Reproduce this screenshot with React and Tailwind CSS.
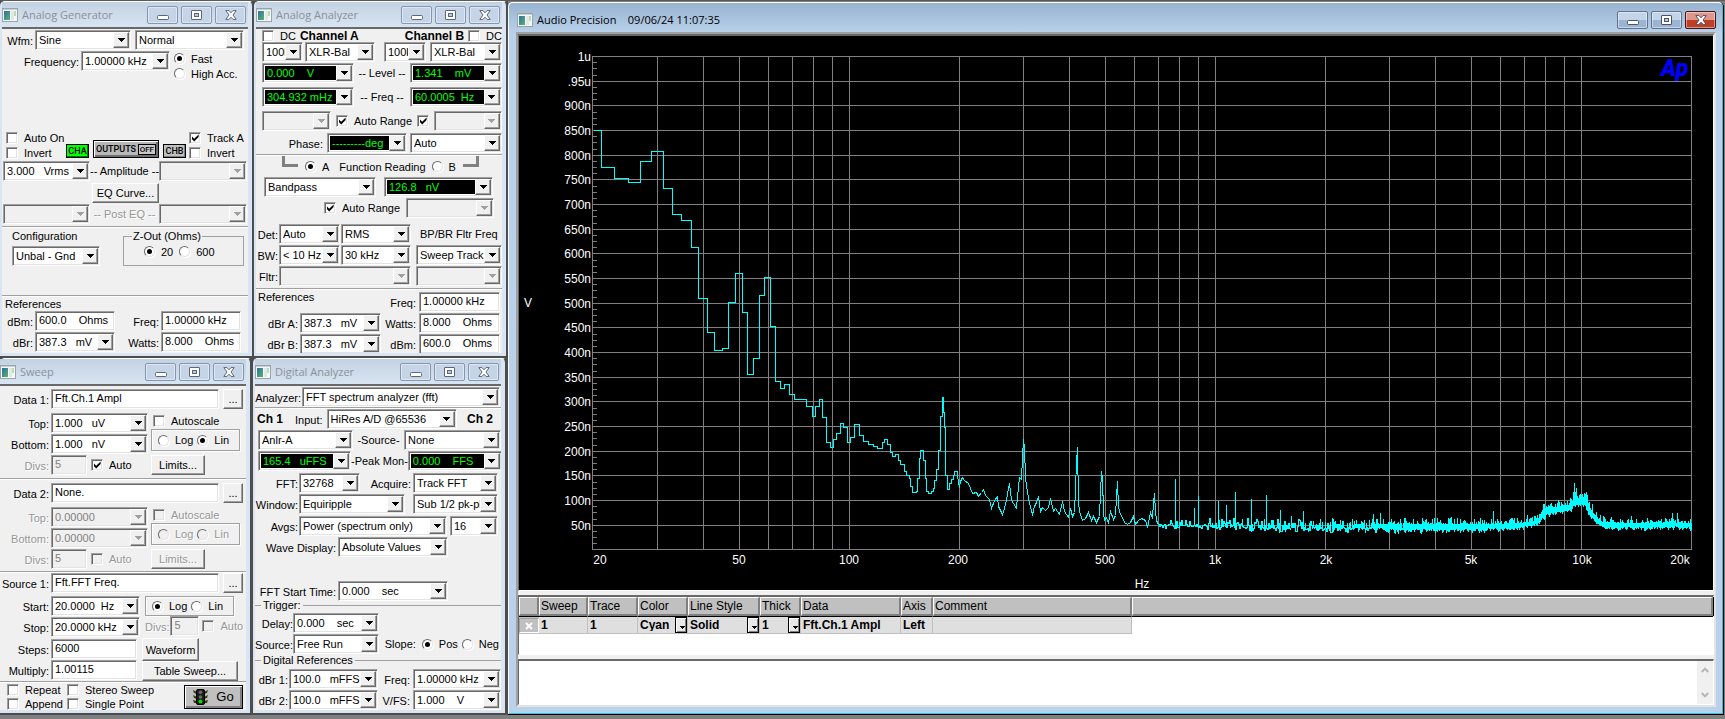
import React from "react";

const cx = (...parts) => parts.filter(Boolean).join(" ");

/* ---------- basic controls ---------- */

const SUNKEN =
  "border border-t-[#a0a0a0] border-l-[#a0a0a0] border-r-white border-b-white shadow-[inset_1px_1px_0_#696969,inset_-1px_-1px_0_#e3e3e3]";
const RAISED =
  "border border-t-white border-l-white border-r-[#696969] border-b-[#696969] shadow-[inset_-1px_-1px_0_#a0a0a0]";

function Arrow({ disabled }) {
  return (
    <svg viewBox="0 0 7 4" className="h-1 w-[7px]" shapeRendering="crispEdges" aria-hidden="true">
      <path d="M0 0H7V1H6V2H5V3H4V4H3V3H2V2H1V1H0Z" fill={disabled ? "#a0a0a0" : "#000"} />
    </svg>
  );
}

function Sel({ id, label, v, w, lit, disabled }) {
  return (
    <div className={cx("flex h-5 shrink-0 p-px", SUNKEN, disabled ? "bg-[#f0f0f0]" : "bg-white", w)}>
      <select
        id={id}
        aria-label={label}
        disabled={disabled}
        defaultValue={v}
        className={cx(
          "h-full w-full min-w-0 flex-1 appearance-none truncate text-clip pl-0.5 leading-3 whitespace-pre outline-none",
          lit ? "border border-r-0 border-white bg-black text-[#00ff00]" : "bg-transparent",
          disabled && "text-[#808080] opacity-100"
        )}
      >
        <option value={v}>{v}</option>
      </select>
      <span
        className={cx(
          "pointer-events-none flex w-4 shrink-0 items-center justify-center bg-[#f0f0f0]",
          RAISED
        )}
      >
        <Arrow disabled={disabled} />
      </span>
    </div>
  );
}

function Field({ id, label, v, w, disabled }) {
  return (
    <input
      id={id}
      aria-label={label}
      defaultValue={v}
      disabled={disabled}
      className={cx(
        "h-5 shrink-0 px-[3px] pb-0.5 leading-3 whitespace-pre outline-none",
        SUNKEN,
        disabled ? "bg-[#f0f0f0] text-[#808080]" : "bg-white",
        w
      )}
    />
  );
}

function Lbl({ htmlFor, w, disabled, children }) {
  return (
    <label
      htmlFor={htmlFor}
      className={cx(
        "shrink-0 pt-0.5 text-right whitespace-nowrap",
        disabled && "text-[#969696] [text-shadow:1px_1px_0_#fff]",
        w
      )}
    >
      {children}
    </label>
  );
}

function Check({ label, hideLabel, checked, disabled, w }) {
  return (
    <label className={cx("relative flex h-[15px] shrink-0 items-center gap-1.5 whitespace-nowrap", w)}>
      <input
        type="checkbox"
        aria-label={label}
        defaultChecked={checked}
        disabled={disabled}
        className={cx(
          "peer size-3 shrink-0 appearance-none",
          SUNKEN,
          disabled ? "bg-[#f0f0f0]" : "bg-white"
        )}
      />
      <svg
        viewBox="0 0 12 12"
        className="pointer-events-none absolute left-0 size-3 opacity-0 peer-checked:opacity-100"
        aria-hidden="true"
      >
        <path d="M3 4.5V7.2L5.2 9.4L9.6 5V2.4L5.2 6.8Z" fill="#000" />
      </svg>
      {!hideLabel && (
        <span className={cx(disabled && "text-[#969696] [text-shadow:1px_1px_0_#fff]")}>{label}</span>
      )}
    </label>
  );
}

function Radio({ name, label, checked, disabled, w }) {
  return (
    <label className={cx("relative flex h-[15px] shrink-0 items-center gap-1.5 whitespace-nowrap", w)}>
      <input
        type="radio"
        name={name}
        defaultChecked={checked}
        disabled={disabled}
        className={cx(
          "peer size-[11px] shrink-0 appearance-none rounded-full border border-t-[#696969] border-l-[#696969] border-r-[#e3e3e3] border-b-[#e3e3e3] shadow-[1px_1px_0_#fff]",
          disabled ? "bg-[#f0f0f0]" : "bg-white"
        )}
      />
      <span className="pointer-events-none absolute left-[3px] hidden size-[5px] rounded-full bg-black peer-checked:block" />
      <span className={cx(disabled && "text-[#969696] [text-shadow:1px_1px_0_#fff]")}>{label}</span>
    </label>
  );
}

function Btn({ children, w, h = "h-5", label, disabled }) {
  return (
    <button
      type="button"
      aria-label={label}
      disabled={disabled}
      className={cx(
        "flex shrink-0 items-center justify-center bg-[#f0f0f0] leading-3 whitespace-nowrap",
        RAISED,
        disabled && "text-[#969696] [text-shadow:1px_1px_0_#fff]",
        w,
        h
      )}
    >
      {children}
    </button>
  );
}

const Rule = ({ m }) => <hr className={cx("h-0.5 border-t border-b border-t-[#a0a0a0] border-b-white", m)} />;
const Row = ({ className, children }) => <div className={cx("flex items-center", className)}>{children}</div>;
const GROUP = "border border-[#a0a0a0] shadow-[1px_1px_0_#fff,inset_1px_1px_0_#fff]";

/* ---------- window chrome ---------- */

function AppIcon() {
  return (
    <svg viewBox="0 0 16 14" className="h-[14px] w-4 shrink-0" aria-hidden="true">
      <defs>
        <linearGradient id="pane" x1="0" y1="0" x2="1" y2="1">
          <stop offset="0" stopColor="#2f6ea5" />
          <stop offset="1" stopColor="#57b56a" />
        </linearGradient>
      </defs>
      <rect x="0.5" y="0.5" width="15" height="13" fill="#f6f8f8" stroke="#9aa3aa" />
      <rect x="1" y="1" width="14" height="1" fill="#c8d0d8" />
      <rect x="2" y="3" width="6" height="9" fill="url(#pane)" />
      <rect x="9" y="3" width="3" height="9" fill="#e2e8ea" />
      <rect x="12" y="3" width="2" height="5" fill="#b9dcb4" />
    </svg>
  );
}

function Glyph({ kind, active }) {
  const line = active ? "#4a5365" : "#5c6679";
  return (
    <svg viewBox="0 0 12 10" className="h-2.5 w-3" aria-hidden="true">
      {kind === "Minimize" && <rect x="0.5" y="5.5" width="11" height="4" rx="1" fill="#fff" stroke={line} />}
      {kind === "Maximize" && (
        <>
          <rect x="0.5" y="0.5" width="10" height="9" rx="0.5" fill="#fff" stroke={line} />
          <rect x="3.5" y="3.5" width="4" height="3" fill="#b9cbe0" stroke={line} />
        </>
      )}
      {kind === "Close" && (
        <path
          d="M0.8 0.6H4L6 2.8L8 0.6H11.2L8 5L11.2 9.4H8L6 7.2L4 9.4H0.8L4 5Z"
          fill="#fff"
          stroke={line}
          strokeLinejoin="round"
        />
      )}
    </svg>
  );
}

function WindowButtons({ active }) {
  return (
    <div className="flex gap-[3px]">
      {["Minimize", "Maximize", "Close"].map((k) => (
        <button
          key={k}
          type="button"
          aria-label={k}
          className={cx(
            "flex h-[18px] w-[31px] items-center justify-center rounded-[2px] border shadow-[inset_0_0_0_1px_rgba(255,255,255,0.45)]",
            !active && "border-[#8596b3] bg-[#c5d5e7]",
            active && k !== "Close" && "border-[#60718c] bg-linear-to-b from-[#c3d4e8] from-50% to-[#9bb4d1] to-50%",
            active && k === "Close" && "border-[#43141c] bg-linear-to-b from-[#e0978a] from-50% to-[#bf3f26] to-50%"
          )}
        >
          <Glyph kind={k} active={active} />
        </button>
      ))}
    </div>
  );
}

const TITLE_FONT = "font-['Open_Sans','Noto_Sans',sans-serif]";

function Panel({ title, edge = "pl-0.5", children }) {
  return (
    <section
      className={cx(
        "flex flex-col rounded-t-[5px] border-t border-r-2 border-b-2 border-t-white border-r-[#4d4d4d] border-b-[#4d4d4d] bg-[#d9e5f2] pr-1 pb-[3px]",
        edge
      )}
    >
      <header className="flex h-[25px] items-center justify-between bg-linear-to-b from-[#c3d2e2] to-[#d7e4f2] pr-0.5">
        <div className="flex items-center gap-1">
          <AppIcon />
          <h2 className={cx("text-[11px] text-[#8b9098]", TITLE_FONT)}>{title}</h2>
        </div>
        <WindowButtons />
      </header>
      <div className="h-[326px] w-[246px] overflow-hidden border-t-2 border-t-[#696969] bg-[#f0f0f0]">
        {children}
      </div>
    </section>
  );
}

/* ---------- panels ---------- */

function AnalogGenerator() {
  return (
    <Panel title="Analog Generator">
      <Row className="mt-px">
        <Lbl htmlFor="ag-wfm" w="w-[31px]">Wfm:</Lbl>
        <Row className="ml-0.5 gap-1">
          <Sel id="ag-wfm" v="Sine" w="w-24" />
          <Sel label="Waveform mode" v="Normal" w="w-[109px]" />
        </Row>
      </Row>
      <div className="mt-px flex items-start">
        <Row className="gap-0.5">
          <Lbl htmlFor="ag-freq" w="w-[77px]">Frequency:</Lbl>
          <Sel id="ag-freq" v="1.00000 kHz" w="w-[89px]" />
        </Row>
        <div className="ml-1">
          <Radio name="ag-acc" label="Fast" checked />
          <Radio name="ag-acc" label="High Acc." />
        </div>
      </div>
      <div className="mt-[49px] flex items-end pl-1">
        <div className="w-15">
          <Check label="Auto On" />
          <Check label="Invert" />
        </div>
        <div className="flex items-end gap-1 pb-0.5 font-[Roboto,sans-serif] text-[9px] leading-3 font-medium">
          <button type="button" className="h-3.5 w-[23px] border border-black bg-[#00ff00] leading-3 shadow-[inset_-1px_-1px_0_#008000]">
            CHA
          </button>
          <button
            type="button"
            className="flex h-[18px] w-[66px] items-center justify-between border border-black bg-[#b8b8b8] px-0.5 shadow-[inset_1px_1px_0_#fff,inset_-2px_-2px_0_#6e6e6e]"
          >
            OUTPUTS
            <span className="border border-black bg-[#c8c8c8] px-px text-[8px] leading-[9px]">OFF</span>
          </button>
          <button type="button" className="h-3.5 w-[23px] border border-black bg-[#c0c0c0] leading-3 shadow-[inset_-1px_-1px_0_#808080]">
            CHB
          </button>
        </div>
        <div className="ml-[3px]">
          <Check label="Track A" checked />
          <Check label="Invert" />
        </div>
      </div>
      <Row className="mt-px ml-px">
        <Sel label="Amplitude A" v={"3.000\u00a0\u00a0 Vrms"} w="w-[87px]" />
        <span className="w-[69px] text-center whitespace-nowrap">-- Amplitude --</span>
        <Sel label="Amplitude B" v="" w="w-[88px]" disabled />
      </Row>
      <Row className="mt-0.5 pl-[90px]">
        <Btn w="w-[67px]">EQ Curve...</Btn>
      </Row>
      <Row className="mt-px ml-px">
        <Sel label="Post EQ A" v="" w="w-[87px]" disabled />
        <span className="w-[69px] text-center whitespace-nowrap text-[#969696] [text-shadow:1px_1px_0_#fff]">
          -- Post EQ --
        </span>
        <Sel label="Post EQ B" v="" w="w-[88px]" disabled />
      </Row>
      <Rule m="mt-0.5" />
      <div className="mt-0.5 flex justify-between pr-1 pl-2.5">
        <div className="flex flex-col gap-1">
          <label htmlFor="ag-cfg">Configuration</label>
          <Sel id="ag-cfg" v="Unbal - Gnd" w="w-[88px]" />
        </div>
        <fieldset className={cx("h-9 w-[121px] border border-[#a0a0a0] pl-5")}>
          <legend className="-ml-3 px-px">Z-Out (Ohms)</legend>
          <Row className="mt-0.5 gap-1.5">
            <Radio name="zout" label="20" checked />
            <Radio name="zout" label="600" />
          </Row>
        </fieldset>
      </div>
      <Rule m="mt-[29px]" />
      <h3 className="mt-px ml-[3px]">References</h3>
      <div className="mt-px flex flex-col gap-px">
        <Row>
          <Lbl htmlFor="ag-dbm" w="w-[31px]">dBm:</Lbl>
          <Row className="ml-0.5 gap-0.5">
            <Field id="ag-dbm" v={"600.0\u00a0\u00a0\u00a0 Ohms"} w="w-20" />
            <Lbl htmlFor="ag-rfreq" w="w-[42px]">Freq:</Lbl>
            <Field id="ag-rfreq" v="1.00000 kHz" w="w-20" />
          </Row>
        </Row>
        <Row>
          <Lbl htmlFor="ag-dbr" w="w-[31px]">dBr:</Lbl>
          <Row className="ml-0.5 gap-0.5">
            <Sel id="ag-dbr" v={"387.3\u00a0\u00a0 mV"} w="w-20" />
            <Lbl htmlFor="ag-watts" w="w-[42px]">Watts:</Lbl>
            <Field id="ag-watts" v={"8.000\u00a0\u00a0\u00a0 Ohms"} w="w-20" />
          </Row>
        </Row>
      </div>
    </Panel>
  );
}

function Bracket({ flip }) {
  return (
    <svg viewBox="0 0 17 11" className={cx("h-[11px] w-[17px] shrink-0 self-start", flip && "-scale-x-100")} aria-hidden="true">
      <path d="M1.5 0V9.5H16" fill="none" stroke="#808080" strokeWidth="3" />
    </svg>
  );
}

function AnalogAnalyzer() {
  return (
    <Panel title="Analog Analyzer">
      <div className="flex h-[13px] items-center justify-between pl-1.5">
        <Row className="gap-1">
          <Check label="DC" />
          <h3 className="text-xs leading-3 font-bold">Channel A</h3>
        </Row>
        <Row className="gap-1">
          <h3 className="text-xs leading-3 font-bold">Channel B</h3>
          <Check label="DC" />
        </Row>
      </div>
      <div className="flex justify-between pl-1.5">
        <Row className="gap-0.5">
          <Sel label="Channel A impedance" v="100k" w="w-[41px]" />
          <Sel label="Channel A input" v="XLR-Bal" w="w-[70px]" />
        </Row>
        <Row className="gap-1">
          <Sel label="Channel B impedance" v="100k" w="w-[42px]" />
          <Sel label="Channel B input" v="XLR-Bal" w="w-[72px]" />
        </Row>
      </div>
      <Row className="mt-px justify-between pl-1.5">
        <Sel label="Channel A level" v={"0.000\u00a0\u00a0\u00a0 V"} w="w-[92px]" lit />
        <span>-- Level --</span>
        <Sel label="Channel B level" v={"1.341\u00a0\u00a0\u00a0 mV"} w="w-[92px]" lit />
      </Row>
      <Row className="mt-1 justify-between pl-1.5">
        <Sel label="Channel A frequency" v="304.932 mHz" w="w-[92px]" lit />
        <span>-- Freq --</span>
        <Sel label="Channel B frequency" v={"60.0005\u00a0 Hz"} w="w-[92px]" lit />
      </Row>
      <Row className="mt-1 justify-between pl-1.5">
        <Sel label="Channel A range" v="" w="w-[69px]" disabled />
        <Check label="Auto Range" checked />
        <Check label="Auto Range B" hideLabel checked />
        <Sel label="Channel B range" v="" w="w-[68px]" disabled />
      </Row>
      <Row className="mt-0.5 justify-end">
        <Lbl htmlFor="aa-phase">Phase:</Lbl>
        <Row className="ml-1 gap-[3px]">
          <Sel id="aa-phase" v="---------deg" w="w-20" lit />
          <Sel label="Phase range" v="Auto" w="w-[92px]" />
        </Row>
      </Row>
      <Rule m="mt-px" />
      <Row className="h-[21px] gap-1.5 pl-[26px]">
        <Bracket />
        <Radio name="fn" label="A" checked />
        <span className="ml-1">Function Reading</span>
        <Radio name="fn" label="B" />
        <Bracket flip />
      </Row>
      <Row className="gap-2 pl-2">
        <Sel label="Function" v="Bandpass" w="w-28" />
        <Sel label="Function reading" v={"126.8\u00a0\u00a0 nV"} w="w-[109px]" lit />
      </Row>
      <Row className="mt-px justify-between pr-2 pl-[68px]">
        <Check label="Auto Range" checked />
        <Sel label="Function range" v="" w="w-[88px]" disabled />
      </Row>
      <div className="mt-1.5 flex flex-col gap-px">
        <Row className="gap-px">
          <Lbl htmlFor="aa-det" w="w-[22px]">Det:</Lbl>
          <Sel id="aa-det" v="Auto" w="w-[61px]" />
          <Sel label="Detector" v="RMS" w="w-[70px]" />
          <label htmlFor="aa-bpbr" className="ml-2">BP/BR Fltr Freq</label>
        </Row>
        <Row className="gap-px">
          <Lbl htmlFor="aa-bw" w="w-[22px]">BW:</Lbl>
          <Sel id="aa-bw" v="< 10 Hz" w="w-[61px]" />
          <Sel label="Upper bandwidth" v="30 kHz" w="w-[70px]" />
          <span className="ml-1">
            <Sel id="aa-bpbr" v="Sweep Track" w="w-[86px]" />
          </span>
        </Row>
        <Row className="gap-px">
          <Lbl htmlFor="aa-fltr" w="w-[22px]">Fltr:</Lbl>
          <Sel id="aa-fltr" v="" w="w-[132px]" disabled />
          <span className="ml-1">
            <Sel label="Filter frequency" v="" w="w-[86px]" disabled />
          </span>
        </Row>
      </div>
      <Rule m="mt-0.5" />
      <div className="mt-0.5 flex flex-col gap-px">
        <div className="flex items-start justify-between pr-0.5 pl-0.5">
          <h3 className="-mt-px">References</h3>
          <Row className="gap-[3px]">
            <Lbl htmlFor="aa-freq">Freq:</Lbl>
            <Field id="aa-freq" v="1.00000 kHz" w="w-[81px]" />
          </Row>
        </div>
        <Row className="justify-between pr-0.5">
          <Row className="gap-0.5">
            <Lbl htmlFor="aa-dbra" w="w-[42px]">dBr A:</Lbl>
            <Sel id="aa-dbra" v={"387.3\u00a0\u00a0 mV"} w="w-[81px]" />
          </Row>
          <Row className="gap-[3px]">
            <Lbl htmlFor="aa-watts">Watts:</Lbl>
            <Field id="aa-watts" v={"8.000\u00a0\u00a0\u00a0 Ohms"} w="w-[81px]" />
          </Row>
        </Row>
        <Row className="justify-between pr-0.5">
          <Row className="gap-0.5">
            <Lbl htmlFor="aa-dbrb" w="w-[42px]">dBr B:</Lbl>
            <Sel id="aa-dbrb" v={"387.3\u00a0\u00a0 mV"} w="w-[81px]" />
          </Row>
          <Row className="gap-[3px]">
            <Lbl htmlFor="aa-dbm">dBm:</Lbl>
            <Field id="aa-dbm" v={"600.0\u00a0\u00a0\u00a0 Ohms"} w="w-[81px]" />
          </Row>
        </Row>
      </div>
    </Panel>
  );
}

function SweepData({ n, value, top, bottom, disabled }) {
  const id = "sw-d" + n;
  return (
    <>
      <Row className="mt-[3px] gap-0.5">
        <Lbl htmlFor={id} w="w-[49px]">Data {n}:</Lbl>
        <Row className="gap-1">
          <Field id={id} v={value} w="w-[168px]" />
          <Btn w="w-5" label={"Browse data " + n}>...</Btn>
        </Row>
      </Row>
      <div className="mt-1 flex gap-[3px]">
        <div className="flex flex-col gap-px">
          <Row className="gap-0.5">
            <Lbl htmlFor={id + "t"} w="w-[49px]" disabled={disabled}>Top:</Lbl>
            <Sel id={id + "t"} v={top} w="w-[97px]" disabled={disabled} />
          </Row>
          <Row className="gap-0.5">
            <Lbl htmlFor={id + "b"} w="w-[49px]" disabled={disabled}>Bottom:</Lbl>
            <Sel id={id + "b"} v={bottom} w="w-[97px]" disabled={disabled} />
          </Row>
        </div>
        <div>
          <Row className="h-4 pl-0.5">
            <Check label="Autoscale" disabled={disabled} />
          </Row>
          <div className={cx("flex h-[22px] w-[89px] items-center gap-1 pl-1.5", GROUP)}>
            <Radio name={id + "s"} label="Log" disabled={disabled} />
            <Radio name={id + "s"} label="Lin" checked={!disabled} disabled={disabled} />
          </div>
        </div>
      </div>
      <Row className="mt-px gap-0.5">
        <Lbl htmlFor={id + "v"} w="w-[49px]" disabled>Divs:</Lbl>
        <Row className="gap-1">
          <Field id={id + "v"} v="5" w="w-9" disabled />
          <Check label="Auto" checked={!disabled} disabled={disabled} w="w-14" />
          <Btn w="w-[54px]" disabled={disabled}>Limits...</Btn>
        </Row>
      </Row>
      <Rule m={disabled ? "mt-0.5" : "mt-[3px]"} />
    </>
  );
}

function TrafficLight() {
  return (
    <svg viewBox="0 0 15 16" className="h-4 w-[15px]" aria-hidden="true">
      <path d="M0 1L4 3V5L1 4ZM0 6L4 8V10L1 9ZM0 11L4 12V14L1 14ZM15 1L11 3V5L14 4ZM15 6L11 8V10L14 9ZM15 11L11 12V14L14 14Z" fill="#3a3a10" />
      <rect x="3.5" y="0.5" width="8" height="15" rx="1.5" fill="#1c1c1c" stroke="#000" />
      <circle cx="7.5" cy="3.3" r="1.8" fill="#6b6b6b" />
      <circle cx="7.5" cy="8" r="1.8" fill="#6b6b6b" />
      <circle cx="7.5" cy="12.6" r="2" fill="#00e000" />
    </svg>
  );
}

function Sweep() {
  return (
    <Panel title="Sweep" edge="pl-0">
      <SweepData n={1} value="Fft.Ch.1 Ampl" top={"1.000\u00a0\u00a0 uV"} bottom={"1.000\u00a0\u00a0 nV"} />
      <SweepData n={2} value="None." top="0.00000" bottom="0.00000" disabled />
      <Row className="gap-0.5">
        <Lbl htmlFor="sw-src" w="w-[49px]">Source 1:</Lbl>
        <Row className="gap-1">
          <Field id="sw-src" v="Fft.FFT Freq." w="w-[168px]" />
          <Btn w="w-5" label="Browse source 1">...</Btn>
        </Row>
      </Row>
      <div className="mt-[3px] flex gap-[5px]">
        <div className="flex flex-col gap-px">
          <Row className="gap-0.5">
            <Lbl htmlFor="sw-start" w="w-[49px]">Start:</Lbl>
            <Sel id="sw-start" v={"20.0000\u00a0 Hz"} w="w-[89px]" />
          </Row>
          <Row className="gap-0.5">
            <Lbl htmlFor="sw-stop" w="w-[49px]">Stop:</Lbl>
            <Sel id="sw-stop" v="20.0000 kHz" w="w-[89px]" />
          </Row>
        </div>
        <div>
          <div className={cx("flex h-5 w-[89px] items-center gap-1 pl-1.5", GROUP)}>
            <Radio name="sw-scale" label="Log" checked />
            <Radio name="sw-scale" label="Lin" />
          </div>
          <Row className="gap-[3px]">
            <Row className="gap-px">
              <Lbl htmlFor="sw-divs" disabled>Divs:</Lbl>
              <Field id="sw-divs" v="5" w="w-[29px]" disabled />
            </Row>
            <Check label="Auto" disabled />
          </Row>
        </div>
      </div>
      <div className="mt-px flex gap-[5px]">
        <div className="flex flex-col gap-px pt-px">
          <Row className="gap-0.5">
            <Lbl htmlFor="sw-steps" w="w-[49px]">Steps:</Lbl>
            <Field id="sw-steps" v="6000" w="w-[86px]" />
          </Row>
          <Row className="gap-0.5">
            <Lbl htmlFor="sw-mult" w="w-[49px]">Multiply:</Lbl>
            <Field id="sw-mult" v="1.00115" w="w-[86px]" />
          </Row>
        </div>
        <div>
          <Btn w="w-[57px]" h="h-[23px]">Waveform</Btn>
          <Btn w="w-24">Table Sweep...</Btn>
        </div>
      </div>
      <Rule />
      <div className="flex items-start justify-between pr-[3px] pl-[7px]">
        <div className="-mt-px grid auto-rows-[14px] grid-cols-[60px_auto]">
          <Check label="Repeat" />
          <Check label="Stereo Sweep" />
          <Check label="Append" />
          <Check label="Single Point" />
        </div>
        <button
          type="button"
          className="mt-0.5 flex h-6 w-[59px] items-center justify-center gap-2 border border-black bg-[#c0c0c0] text-[13px] leading-4 shadow-[inset_1px_1px_0_#fff,inset_-2px_-2px_0_#808080]"
        >
          <TrafficLight />
          Go
        </button>
      </div>
    </Panel>
  );
}

function DigitalAnalyzer() {
  return (
    <Panel title="Digital Analyzer">
      <Row className="mt-px gap-px">
        <Lbl htmlFor="da-an" w="w-[46px]">Analyzer:</Lbl>
        <Sel id="da-an" v="FFT spectrum analyzer (fft)" w="w-[198px]" />
      </Row>
      <Rule />
      <Row className="pr-2 pl-0.5">
        <h3 className="w-[38px] text-xs leading-3 font-bold">Ch 1</h3>
        <Lbl htmlFor="da-in">Input:</Lbl>
        <span className="mr-auto ml-1">
          <Sel id="da-in" v="HiRes A/D @65536" w="w-[130px]" />
        </span>
        <h3 className="text-xs leading-3 font-bold">Ch 2</h3>
      </Row>
      <Row className="mt-px justify-between pl-[3px]">
        <Sel label="Channel 1 source" v="Anlr-A" w="w-[95px]" />
        <span>-Source-</span>
        <Sel label="Channel 2 source" v="None" w="w-[97px]" />
      </Row>
      <Row className="mt-px justify-between pl-[3px]">
        <Sel label="Channel 1 peak" v={"165.4\u00a0\u00a0 uFFS"} w="w-[93px]" lit />
        <span className="whitespace-nowrap">-Peak Mon-</span>
        <Sel label="Channel 2 peak" v={"0.000\u00a0\u00a0\u00a0 FFS"} w="w-[94px]" lit />
      </Row>
      <Row className="mt-0.5 justify-between pr-[3px]">
        <Row className="gap-px">
          <Lbl htmlFor="da-fft" w="w-[43px]">FFT:</Lbl>
          <Sel id="da-fft" v="32768" w="w-[61px]" />
        </Row>
        <Row className="gap-0.5">
          <Lbl htmlFor="da-acq">Acquire:</Lbl>
          <Sel id="da-acq" v="Track FFT" w="w-[85px]" />
        </Row>
      </Row>
      <Row className="mt-px justify-between pr-[3px]">
        <Row className="gap-px">
          <Lbl htmlFor="da-win" w="w-[43px]">Window:</Lbl>
          <Sel id="da-win" v="Equiripple" w="w-[106px]" />
        </Row>
        <Sel label="Alignment" v="Sub 1/2 pk-pk" w="w-[85px]" />
      </Row>
      <Row className="mt-0.5 justify-between pr-[3px]">
        <Row className="gap-px">
          <Lbl htmlFor="da-avg" w="w-[43px]">Avgs:</Lbl>
          <Sel id="da-avg" v="Power (spectrum only)" w="w-[148px]" />
        </Row>
        <Sel label="Average count" v="16" w="w-12" />
      </Row>
      <Row className="mt-px gap-0.5">
        <Lbl htmlFor="da-wave" w="w-[81px]">Wave Display:</Lbl>
        <Sel id="da-wave" v="Absolute Values" w="w-[110px]" />
      </Row>
      <Row className="mt-6 gap-0.5">
        <Lbl htmlFor="da-start" w="w-[81px]">FFT Start Time:</Lbl>
        <Sel id="da-start" v={"0.000\u00a0\u00a0\u00a0 sec"} w="w-[110px]" />
      </Row>
      <fieldset className="-mt-0.5 border-t border-[#a0a0a0]">
        <legend className="ml-1.5 px-0.5">Trigger:</legend>
        <Row className="mt-0.5">
          <Lbl htmlFor="da-delay" w="w-[38px]">Delay:</Lbl>
          <Sel id="da-delay" v={"0.000\u00a0\u00a0\u00a0 sec"} w="w-[86px]" />
        </Row>
        <Row className="mt-px justify-between pr-0.5">
          <Row>
            <Lbl htmlFor="da-src" w="w-[38px]">Source:</Lbl>
            <Sel id="da-src" v="Free Run" w="w-[86px]" />
          </Row>
          <Row className="gap-1">
            <span className="pr-0.5">Slope:</span>
            <Radio name="slope" label="Pos" checked />
            <Radio name="slope" label="Neg" />
          </Row>
        </Row>
      </fieldset>
      <fieldset className="border-t border-[#a0a0a0]">
        <legend className="ml-1.5 px-0.5">Digital References</legend>
        <div className="mt-[3px] flex flex-col gap-px">
          <Row className="justify-between">
            <Row className="gap-px">
              <Lbl htmlFor="da-dbr1" w="w-[33px]">dBr 1:</Lbl>
              <Sel id="da-dbr1" v={"100.0\u00a0\u00a0 mFFS"} w="w-[89px]" />
            </Row>
            <Row className="gap-[3px]">
              <Lbl htmlFor="da-freq">Freq:</Lbl>
              <Sel id="da-freq" v="1.00000 kHz" w="w-[88px]" />
            </Row>
          </Row>
          <Row className="justify-between">
            <Row className="gap-px">
              <Lbl htmlFor="da-dbr2" w="w-[33px]">dBr 2:</Lbl>
              <Sel id="da-dbr2" v={"100.0\u00a0\u00a0 mFFS"} w="w-[89px]" />
            </Row>
            <Row className="gap-[3px]">
              <Lbl htmlFor="da-vfs">V/FS:</Lbl>
              <Sel id="da-vfs" v={"1.000\u00a0\u00a0\u00a0 V"} w="w-[88px]" />
            </Row>
          </Row>
        </div>
      </fieldset>
    </Panel>
  );
}

/* ---------- spectrum chart ---------- */

const PLOT = { left: 74, right: 1172, top: 20, bottom: 513 };
const DECADE = (PLOT.right - PLOT.left) / 3;
const xOf = (hz) => Math.round(PLOT.left + Math.log10(hz / 20) * DECADE);
const yOf = (nv) => PLOT.bottom - ((nv - 1) / 999) * (PLOT.bottom - PLOT.top);

const GRID_HZ = [
  30, 40, 50, 60, 70, 80, 90, 100, 200, 300, 400, 500, 600, 700, 800, 900, 1000, 2000, 3000, 4000, 5000, 6000, 7000,
  8000, 9000, 10000,
];
const X_LABELS = [
  [81, "20"], [220, "50"], [330, "100"], [439, "200"], [586, "500"], [696, "1k"], [807, "2k"], [952, "5k"],
  [1063, "10k"], [1161, "20k"],
];

/* x, y pairs; the wide bins on the left are drawn as steps */
const COARSE = [
  74, 94, 82, 131, 95, 142, 109, 146, 121, 125, 132, 115, 144, 152, 153, 178, 162, 184, 172, 211, 179, 262, 188, 296,
  195, 314, 203, 312, 209, 266, 216, 237, 223, 276, 228, 338, 234, 322, 240, 259, 245, 241, 251, 290, 256, 345, 261,
  352, 265, 348, 270, 358, 275, 363, 287, 370, 293, 380, 296, 370, 300, 363, 303, 381, 307, 406, 311, 411, 314, 403,
  317, 397, 321, 387, 324, 391, 328, 406, 331, 401, 335, 388, 340, 399, 344, 405, 349, 408, 354, 410, 358, 412, 363,
  406, 365, 403, 368, 408, 371, 416, 373, 420, 376, 418, 379, 424, 381, 428, 385, 435, 387, 439, 390, 442, 391, 450,
  393, 456, 397, 455, 398, 442, 400, 422, 401, 414, 404, 424, 406, 442, 407, 455, 409, 457, 412, 455, 414, 452, 415,
  444, 417, 433, 419, 414, 421, 380, 423, 361, 424, 376, 425, 391, 426, 439, 428, 453, 430, 447, 432, 443, 434, 439,
  435, 435, 438, 440, 440, 451, 441, 445, 443, 441, 445, 444, 449, 447, 451, 452, 453, 457, 457, 456, 459, 460, 462,
  456, 464, 453, 466, 459, 470, 463, 472, 472, 475, 464, 478, 460, 479, 470, 483, 478, 485, 472, 487, 463, 490, 447,
  492, 464, 494, 467, 497, 472, 498, 460, 500, 441, 502, 443, 503, 420, 504, 403, 505, 411, 506, 442, 508, 456, 510,
  467, 513, 478, 515, 470, 517, 466, 519, 460, 521, 475, 523, 471, 526, 474, 529, 471, 531, 462, 534, 475, 536, 472,
  540, 478, 543, 465, 545, 475, 549, 481, 551, 472, 553, 480, 555, 476, 557, 426, 558, 411, 559, 465, 560, 475, 563,
  484, 566, 482, 569, 476, 572, 484, 574, 480, 577, 486, 580, 480, 581, 456, 582, 435, 583, 441, 584, 476, 585, 484,
  587, 481, 589, 487, 591, 475, 594, 483, 596, 479, 597, 460, 598, 445, 599, 471, 601, 478, 603, 481, 605, 486, 608,
  488, 611, 486, 614, 480, 616, 488, 619, 484, 622, 482, 626, 484, 628, 491, 630, 481, 631, 476, 633, 482, 634, 466,
  635, 457, 636, 475, 637, 484, 639, 488,
];

/* narrow harmonics above the noise floor: x, y */
const SPIKES = {
  656: 443, 675: 472, 679: 460, 699: 465, 707: 469, 716: 456, 732: 463, 747: 459, 761: 474, 772: 480, 784: 475,
  854: 478, 861: 477, 974: 475, 1008: 479, 1052: 463, 1054: 456, 1055: 447, 1057: 452, 1061: 458, 1066: 458,
  1112: 480, 1153: 477, 1158: 477,
};

/* x, centre, half height of the noise band */
const BAND = [
  [640, 489, 3], [690, 489, 5], [740, 490, 5], [800, 490, 5], [900, 490, 5], [960, 490, 5], [1000, 489, 4],
  [1012, 487, 4], [1019, 484, 4], [1024, 476, 6], [1028, 473, 6], [1038, 473, 5], [1050, 471, 6], [1056, 464, 6],
  [1066, 464, 6], [1070, 473, 6], [1076, 482, 5], [1082, 487, 4], [1100, 489, 4], [1150, 488, 4], [1172, 489, 4],
];

function buildTrace() {
  let seed = 20240906;
  const rnd = () => {
    seed = (seed * 1664525 + 1013904223) % 4294967296;
    return seed / 4294967296;
  };
  let d = "M" + COARSE[0] + ".5 " + COARSE[1] + ".5";
  for (let i = 2; i < COARSE.length; i += 2) {
    const [x, y] = [COARSE[i], COARSE[i + 1]];
    d += x < 440 ? `H${x}.5V${y}.5` : `L${x}.5 ${y}.5`;
  }
  let k = 0;
  for (let x = 640; x <= 1172; x++) {
    while (k < BAND.length - 2 && x > BAND[k + 1][0]) k++;
    const [x0, c0, h0] = BAND[k];
    const [x1, c1, h1] = BAND[k + 1];
    const t = (x - x0) / (x1 - x0);
    const c = c0 + (c1 - c0) * t;
    const h = h0 + (h1 - h0) * t;
    const density = Math.min(1, Math.max(0, (x - 680) / 220));
    const floor = 0.4 * density;
    let hi = c - h * (floor + Math.pow(rnd(), 2) * 1.4);
    let lo = c + h * (floor + Math.pow(rnd(), 2) * 1.1);
    const both = rnd() < density;
    const up = rnd() > 0.5;
    if (SPIKES[x]) hi = SPIKES[x];
    const xx = x + 0.5;
    if (both || SPIKES[x]) d += `L${xx} ${lo.toFixed(1)}L${xx} ${hi.toFixed(1)}L${xx} ${lo.toFixed(1)}`;
    else d += `H${xx}V${(up ? hi : lo).toFixed(1)}`;
  }
  return d;
}

const TRACE = buildTrace();

function Spectrum() {
  const ticks = Array.from({ length: 80 }, (_, i) => 12.5 * (i + 1)).filter((v) => v % 50 !== 0);
  const rows = Array.from({ length: 20 }, (_, i) => 50 * (i + 1));
  const label = (v) => (v === 1000 ? "1u" : v === 950 ? ".95u" : v + "n");
  return (
    <svg
      viewBox="0 0 1194 554"
      className="block h-auto w-full bg-black font-['Liberation_Sans',Arial,sans-serif] text-xs"
      role="img"
      aria-label="Amplitude spectrum, 20 Hz to 20 kHz"
    >
      <g stroke="#808080" strokeWidth="1" shapeRendering="crispEdges" fill="none">
        <rect x="73.5" y="20.5" width="1099" height="493" />
        {rows.slice(0, 19).map((v) => {
          const y = Math.round(yOf(v)) + 0.5;
          return <path key={v} d={`M74 ${y}H1172`} />;
        })}
        {GRID_HZ.map((f) => (
          <path key={f} d={`M${xOf(f) + 0.5} 20V513`} />
        ))}
        {ticks.map((v) => (
          <path key={v} d={`M74 ${Math.round(yOf(v)) + 0.5}h4`} />
        ))}
      </g>
      <g fill="#fff">
        {rows.map((v) => (
          <text key={v} x="72" y={Math.round(yOf(v)) + 5} textAnchor="end">
            {label(v)}
          </text>
        ))}
        {X_LABELS.map(([x, t]) => (
          <text key={t} x={x} y="528" textAnchor="middle">
            {t}
          </text>
        ))}
        <text x="9" y="271" textAnchor="middle">V</text>
        <text x="623" y="552" textAnchor="middle">Hz</text>
      </g>
      <path d={TRACE} fill="none" stroke="#00ffff" strokeWidth="1" shapeRendering="crispEdges" />
      <text x="1142" y="40" fill="#0000ff" fontSize="23" fontWeight="900" fontStyle="italic" fontFamily="Roboto, sans-serif">
        Ap
      </text>
    </svg>
  );
}

/* ---------- main window ---------- */

const TH =
  "h-[19px] border-t border-l border-r-2 border-b-2 border-t-white border-l-white border-r-[#808080] border-b-[#808080] bg-[#c0c0c0] px-px text-left font-normal whitespace-nowrap shadow-[1px_0_0_#000]";
const TD = "h-4 border-t border-r border-b border-[#c0c0c0] border-t-black bg-[#dfdfdf] p-0 pl-0.5 font-bold whitespace-nowrap";

function CellPicker({ label, value }) {
  return (
    <div className="flex h-4 items-center justify-between">
      <select aria-label={label} defaultValue={value} className="min-w-0 flex-1 appearance-none bg-transparent leading-3 font-bold">
        <option>{value}</option>
      </select>
      <span className="pointer-events-none flex h-4 w-3 items-center justify-center border border-black bg-[#e8e8e8] pt-1 pl-0.5 shadow-[inset_1px_1px_0_#fff,inset_-1px_-1px_0_#808080]">
        <svg viewBox="0 0 5 3" className="h-[3px] w-[5px]" shapeRendering="crispEdges" aria-hidden="true">
          <path d="M0 0H5V1H4V2H3V3H2V2H1V1H0Z" />
        </svg>
      </span>
    </div>
  );
}

function TraceTable() {
  return (
    <table className="w-full table-fixed border-separate border-spacing-0 text-xs leading-3">
      <colgroup>
        <col className="w-5" />
        <col className="w-[49px]" />
        <col className="w-[50px]" />
        <col className="w-[50px]" />
        <col className="w-[72px]" />
        <col className="w-[41px]" />
        <col className="w-[100px]" />
        <col className="w-8" />
        <col className="w-[199px]" />
        <col />
      </colgroup>
      <thead>
        <tr>
          {["", "Sweep", "Trace", "Color", "Line Style", "Thick", "Data", "Axis", "Comment", ""].map((h, i) => (
            <th key={i} className={TH}>
              {h}
            </th>
          ))}
        </tr>
      </thead>
      <tbody>
        <tr>
          <td className="h-4 border-t border-t-black bg-[#c0c0c0] p-0">
            <label className="relative flex h-[15px] items-center justify-center border border-t-[#a0a0a0] border-l-[#a0a0a0] border-r-white border-b-white">
              <input type="checkbox" defaultChecked aria-label="Show trace 1" className="absolute inset-0 appearance-none" />
              <svg viewBox="0 0 8 8" className="size-2" aria-hidden="true">
                <path d="M1 1L7 7M7 1L1 7" stroke="#fff" strokeWidth="2" />
              </svg>
            </label>
          </td>
          <td className={TD}>1</td>
          <td className={TD}>1</td>
          <td className={TD}>
            <CellPicker label="Color" value="Cyan" />
          </td>
          <td className={TD}>
            <CellPicker label="Line style" value="Solid" />
          </td>
          <td className={TD}>
            <CellPicker label="Thickness" value="1" />
          </td>
          <td className={TD}>Fft.Ch.1 Ampl</td>
          <td className={TD}>Left</td>
          <td className={TD} />
          <td className="border-t border-t-black bg-white p-0" />
        </tr>
      </tbody>
    </table>
  );
}

function Chevron({ up }) {
  return (
    <svg viewBox="0 0 8 6" className={cx("h-1.5 w-2", !up && "rotate-180")} aria-hidden="true">
      <path d="M0.8 5L4 1.6L7.2 5" fill="none" stroke="#b4b4b4" strokeWidth="2" />
    </svg>
  );
}

function MainWindow() {
  return (
    <main className="mt-px mr-px flex min-w-0 flex-1 flex-col rounded-t-[5px] border-r border-b border-black bg-[#b9d1ea]">
      <div className="flex flex-1 flex-col rounded-t-[5px] border border-t-white border-l-white border-r-[#2ec4dc] border-b-[#2ec4dc] bg-linear-to-b from-[#99b4d1] to-[#b9d1ea] to-[30px] pr-1.5 pb-1.5 pl-[7px]">
        <header className="flex h-[29px] items-center justify-between pt-1">
          <div className="flex items-center gap-1 pl-px">
            <AppIcon />
            <h1 className={cx("text-[11px] whitespace-pre text-black", TITLE_FONT)}>
              {"Audio Precision    09/06/24 11:07:35"}
            </h1>
          </div>
          <WindowButtons active />
        </header>
        <div className="flex flex-1 flex-col border-2 border-t-[#a0a0a0] border-l-[#a0a0a0] border-r-[#e3e3e3] border-b-[#e3e3e3] bg-[#f0f0f0]">
          <div className="border border-t-2 border-t-[#696969] border-l-[#696969] border-r-white border-b-white">
            <Spectrum />
          </div>
          <div className="mt-1 flex h-[60px] flex-col border border-t-2 border-t-[#696969] border-l-[#696969] border-r-white border-b-white bg-white">
            <TraceTable />
          </div>
          <div className="mt-1 flex min-h-[44px] flex-1 border border-t-2 border-t-[#696969] border-l-[#696969] border-r-white border-b-white bg-white">
            <textarea aria-label="Comments" className="block flex-1 resize-none outline-none" />
            <div className="flex w-4 flex-col items-center justify-between bg-[#f0f0f0] py-1.5">
              <Chevron up />
              <Chevron />
            </div>
          </div>
        </div>
      </div>
    </main>
  );
}

export default function App() {
  return (
    <div className="min-h-screen bg-[#808080] font-['Liberation_Sans',Arial,sans-serif] text-[11px] leading-3 text-black">
      <div className="flex border-t border-t-[#5a5a5a]">
        <div className="w-[508px] shrink-0 bg-[#4d4d4d]">
          <div className="flex">
            <AnalogGenerator />
            <AnalogAnalyzer />
          </div>
          <div className="flex gap-px">
            <Sweep />
            <DigitalAnalyzer />
          </div>
        </div>
        <MainWindow />
      </div>
    </div>
  );
}
